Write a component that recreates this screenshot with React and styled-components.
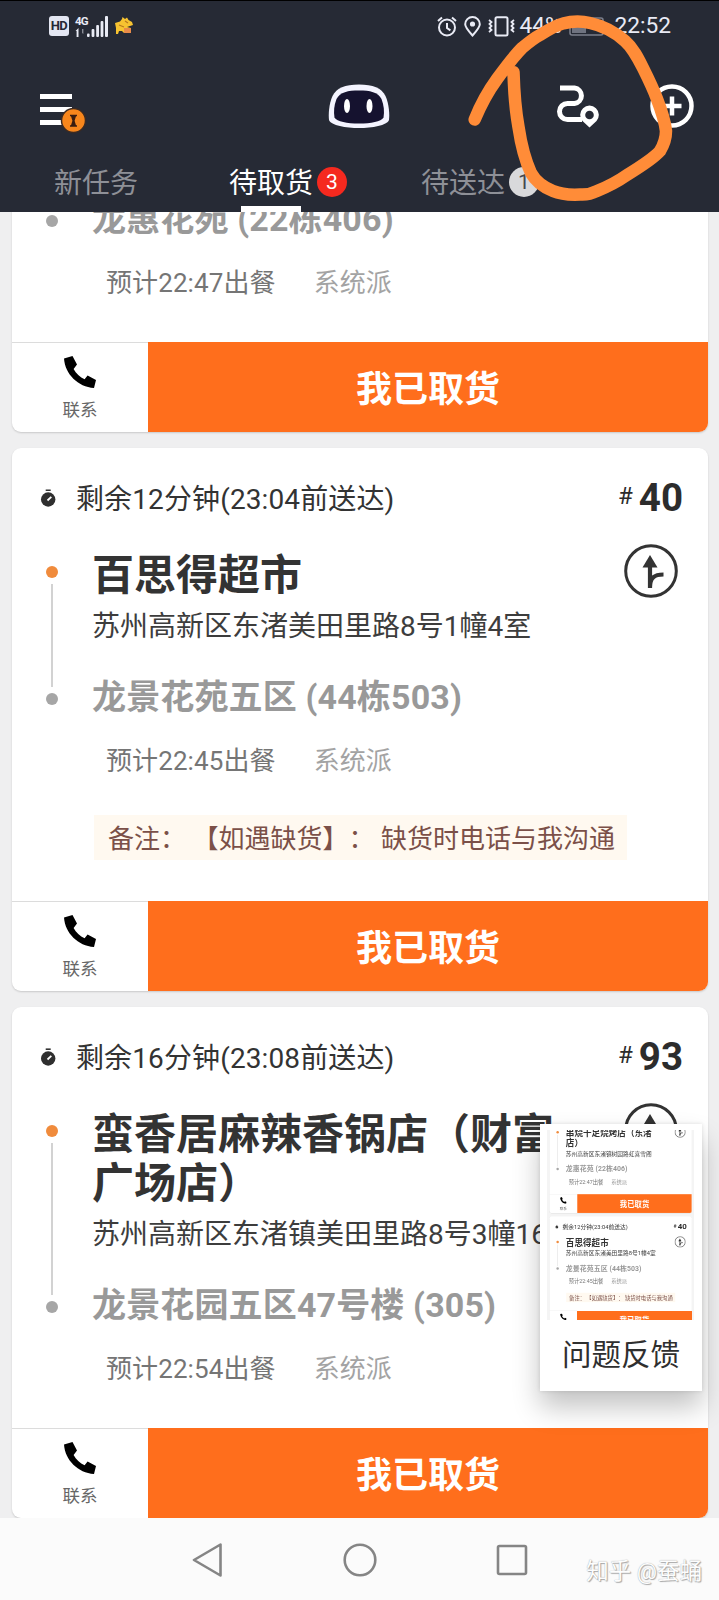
import React from 'react';
import styled, { createGlobalStyle } from 'styled-components';

const Global = createGlobalStyle`
  * { box-sizing: border-box; }
  body {
    margin: 0;
    background: #efeff0;
    font-family: Roboto, "Noto Sans CJK SC", sans-serif;
    text-spacing-trim: space-all;
  }
`;

const Screen = styled.div`
  position: relative;
  width: 719px;
  height: 1600px;
  display: flex;
  flex-direction: column;
  overflow: hidden;
`;

/* ---------- header ---------- */
const Header = styled.header`
  height: 212px;
  flex: none;
  background: #262a35;
  border-top: 1px solid #000;
  display: flex;
  flex-direction: column;
`;
const StatusBar = styled.div`
  height: 50px;
  padding: 0 48px 0 49px;
  display: flex;
  align-items: center;
  justify-content: space-between;
  color: #e9ebf5;
`;
const StatusGroup = styled.div`
  display: flex;
  align-items: center;
  gap: ${(p) => p.$gap || 7}px;
`;
const HdChip = styled.span`
  width: 20px;
  height: 20px;
  border-radius: 3px;
  background: #e3e6f2;
  color: #262a35;
  font-size: 13px;
  font-weight: 700;
  line-height: 20px;
  text-align: center;
  letter-spacing: -0.6px;
`;
const Signal = styled.div`
  display: flex;
  align-items: flex-end;
`;
const Generation = styled.div`
  width: 12px;
  height: 21px;
  font-size: 11.5px;
  line-height: 10px;
  font-weight: 700;
  letter-spacing: -0.8px;
`;
const SignalBars = styled.svg`
  margin-left: -12px;
`;
const Vibrate = styled.svg`
  margin-right: -3px;
`;
const StatusText = styled.span`
  font-size: 22.7px;
  line-height: 26px;
  white-space: nowrap;
`;
const Toolbar = styled.div`
  height: 105px;
  padding: 5px 25px 0 40px;
  display: grid;
  grid-template-columns: 1fr 62px 1fr;
  align-items: center;
`;
const Robot = styled.svg`
  margin-left: -8px;
`;
const ToolbarEnd = styled.div`
  display: flex;
  justify-content: flex-end;
  align-items: center;
  gap: 51px;
`;
const MenuButton = styled.div`
  position: relative;
  width: 47px;
  height: 40px;
  margin-top: 7px;
  padding-top: 4px;
  display: flex;
  flex-direction: column;
  gap: 8px;
`;
const MenuBar = styled.i`
  width: 32px;
  height: 5.3px;
  background: #fff;
`;
const CoinBadge = styled.svg`
  position: absolute;
  left: 20px;
  top: 17px;
`;
const Tabs = styled.nav`
  height: 56px;
  display: flex;
  padding-left: 54px;
`;
const Tab = styled.div`
  display: flex;
  flex-direction: column;
  justify-content: space-between;
  width: ${(p) => p.$width}px;
  color: ${(p) => (p.$active ? '#fff' : '#8e9097')};
`;
const TabLabel = styled.div`
  display: flex;
  align-items: center;
  gap: 4px;
  height: 50px;
  padding-top: 5px;
  font-size: 28px;
  line-height: 40px;
  white-space: nowrap;
`;
const Count = styled.span`
  width: 30px;
  height: 30px;
  margin-top: -3px;
  border-radius: 50%;
  text-align: center;
  font-size: 21px;
  line-height: 30px;
  background: ${(p) => (p.$muted ? '#d9d9db' : '#f5291f')};
  color: ${(p) => (p.$muted ? '#45484f' : '#fff')};
`;
const Underline = styled.i`
  height: 6px;
  width: 60px;
  margin-left: 12px;
  background: #fff;
`;
const Stroke = styled.svg`
  position: absolute;
  left: 0;
  top: 0;
  pointer-events: none;
`;

/* ---------- order list ---------- */
const List = styled.main`
  flex: 1;
  min-height: 0;
  padding: 0 11px 0 12px;
  overflow: hidden;
  display: flex;
  flex-direction: column;
  justify-content: flex-end;
  gap: 16px;
  background: #efeff0;
`;
const CardBox = styled.article`
  flex: none;
  background: #fff;
  border-radius: 9px;
  overflow: hidden;
  box-shadow: 0 1px 2px rgba(0, 0, 0, 0.16);
`;
const CardHead = styled.div`
  height: 100px;
  padding: 0 25px 0 28px;
  display: flex;
  align-items: center;
  color: #333;
`;
const Remaining = styled.span`
  flex: 1;
  margin: 3px 0 0 19px;
  font-size: 28px;
  line-height: 40px;
  letter-spacing: 0.12px;
  white-space: nowrap;
`;
const Serial = styled.span`
  font-size: 38.5px;
  line-height: 44px;
  font-weight: 700;
  color: #2c2c2c;
  display: flex;
  align-items: center;
  gap: 6px;
`;
const Hash = styled.small`
  font-size: 24px;
  line-height: 36px;
  font-weight: 400;
  margin-top: -4px;
`;
const Route = styled.div`
  padding: ${(p) => (p.$full ? '1px 30px 0 0' : '0')};
  display: grid;
  grid-template-columns: 80px 1fr 54px;
`;
const Rail = styled.div`
  padding: ${(p) => (p.$full ? '17px 0 16px' : '20px 0 16px')};
  display: flex;
  flex-direction: column;
  align-items: center;
  gap: 6px;
`;
const Dot = styled.i`
  width: 12px;
  height: 12px;
  border-radius: 50%;
  background: ${(p) => (p.$start ? '#f08b3c' : '#a6a6a6')};
`;
const RailLine = styled.i`
  flex: 1;
  width: 2px;
  background: #d2d2d2;
`;
const Stops = styled.div`
  width: 496px;
  padding-top: ${(p) => (p.$full ? 2 : 0)}px;
`;
const Shop = styled.h2`
  margin: 0;
  font-size: 42px;
  line-height: 49px;
  font-weight: 700;
  color: #333;
`;
const Address = styled.p`
  margin: 8px 0 27px;
  font-size: 28px;
  line-height: 38px;
  color: #3d3d3d;
  white-space: nowrap;
`;
const Destination = styled.h3`
  margin: 0;
  font-size: 34px;
  line-height: 48px;
  letter-spacing: 0.15px;
  font-weight: 700;
  color: #999;
  white-space: nowrap;
`;
const Direction = styled.svg`
  margin-top: -5px;
`;
const Meta = styled.div`
  margin: 22px 0 0 94px;
  display: flex;
  gap: 38px;
  font-size: 26px;
  line-height: 36px;
  letter-spacing: 0.1px;
  color: #757575;
  white-space: nowrap;
`;
const Source = styled.span`
  color: #a3a3a3;
`;
const Remark = styled.div`
  margin: 36px 0 0 82px;
  width: 533px;
  height: 45px;
  padding-left: 14px;
  background: #fff9f0;
  color: #7b5048;
  font-size: 26px;
  line-height: 48px;
  white-space: pre;
`;
const Actions = styled.div`
  margin-top: 41px;
  height: 90px;
  display: flex;
`;
const Contact = styled.div`
  width: 136px;
  border-top: 1px solid #dcdcdc;
  padding-top: 13px;
  display: flex;
  flex-direction: column;
  align-items: center;
  font-size: 17.5px;
  line-height: 24px;
  color: #666;
  gap: 10px;
`;
const Confirm = styled.div`
  flex: 1;
  background: #ff6e1c;
  color: #fff;
  font-size: 36px;
  line-height: 96px;
  height: 90px;
  font-weight: 700;
  text-align: center;
  white-space: nowrap;
`;

/* ---------- feedback popup ---------- */
const Feedback = styled.aside`
  position: absolute;
  left: 540px;
  top: 1124px;
  width: 162px;
  height: 267px;
  padding: 6px 7px 0;
  background: #fff;
  box-shadow: 0 16px 26px rgba(0, 0, 0, 0.24), 0 0 4px rgba(0, 0, 0, 0.12);
`;
const Preview = styled.div`
  width: 147px;
  height: 190px;
  overflow: hidden;
`;
const PreviewPage = styled.div`
  width: 719px;
  height: 912px;
  transform: scale(0.2045, 0.2084);
  transform-origin: 0 0;
  display: flex;
  flex-direction: column;
  gap: 16px;
  padding: 0 11px 0 12px;
  background: #f4f4f4;
`;
const PreviewFirst = styled.div`
  margin-top: -113px;
`;
const FeedbackLabel = styled.div`
  height: 70px;
  font-size: 29.5px;
  line-height: 70px;
  text-align: center;
  color: #2f2f2f;
  white-space: nowrap;
`;

/* ---------- system navigation ---------- */
const NavBar = styled.footer`
  height: 82px;
  flex: none;
  position: relative;
  background: #fbfbfb;
  display: flex;
  align-items: center;
  justify-content: center;
  gap: 119px;
  padding-top: 2px;
`;
const Watermark = styled.span`
  position: absolute;
  right: 17px;
  bottom: 13px;
  font-size: 22.5px;
  line-height: 32px;
  color: #fdfdfd;
  text-shadow: 0 0 1px #999, 1px 1px 1px #a8a8a8;
  white-space: nowrap;
`;

const PhoneIcon = () => (
  <svg width="32" height="32" viewBox="0 0 32 32" fill="#000">
    <path d="M0 2.5 L8.5 0 L13 8.5 L9.6 13 C12 17.5 16 21.2 20.6 23.2 L23.6 19.6 L32 24 L30 32 C14 31 1 18 0 2.5Z" />
  </svg>
);
const TimerIcon = () => (
  <svg width="17" height="19" viewBox="0 0 17 19">
    <path d="M5.7 1.2h5" stroke="#333" strokeWidth="1.6" />
    <circle cx="8.2" cy="10.5" r="7.2" fill="#2f2f2f" />
    <path d="M7.5 11.5l3.8-3.6" stroke="#fff" strokeWidth="1.8" />
  </svg>
);
const DirectionIcon = () => (
  <Direction width="54" height="54" viewBox="0 0 54 54">
    <circle cx="27" cy="27" r="25.3" fill="none" stroke="#333" strokeWidth="3" />
    <path d="M26 11L33.5 23.5H18.5Z" fill="#333" />
    <path d="M26 21V44M26 43C26 34 30 30.5 39.5 30.5" fill="none" stroke="#333" strokeWidth="4.2" />
  </Direction>
);

function OrderCard({ order }) {
  const full = Boolean(order.shop);
  return (
    <CardBox>
      {full && (
        <CardHead>
          <TimerIcon />
          <Remaining>{order.remaining}</Remaining>
          <Serial><Hash>#</Hash>{order.serial}</Serial>
        </CardHead>
      )}
      <Route $full={full}>
        <Rail $full={full}>
          {full && <Dot $start />}
          {full && <RailLine />}
          <Dot />
        </Rail>
        <Stops $full={full}>
          {full && <Shop>{order.shop}</Shop>}
          {full && <Address>{order.address}</Address>}
          <Destination>{order.destination}</Destination>
        </Stops>
        {full && <DirectionIcon />}
      </Route>
      <Meta>
        <span>{order.ready}</span>
        <Source>系统派</Source>
      </Meta>
      {order.remark && <Remark>{order.remark}</Remark>}
      <Actions>
        <Contact><PhoneIcon />联系</Contact>
        <Confirm>我已取货</Confirm>
      </Actions>
    </CardBox>
  );
}

const first = { destination: '龙惠花苑 (22栋406)', ready: '预计22:47出餐' };
const second = {
  remaining: '剩余12分钟(23:04前送达)',
  serial: '40',
  shop: '百思得超市',
  address: '苏州高新区东渚美田里路8号1幢4室',
  destination: '龙景花苑五区 (44栋503)',
  ready: '预计22:45出餐',
  remark: '备注： 【如遇缺货】： 缺货时电话与我沟通',
};
const third = {
  remaining: '剩余16分钟(23:08前送达)',
  serial: '93',
  shop: '蛮香居麻辣香锅店（财富广场店）',
  address: '苏州高新区东渚镇美田里路8号3幢16',
  destination: '龙景花园五区47号楼 (305)',
  ready: '预计22:54出餐',
};
const firstFull = {
  ...first,
  remaining: '',
  serial: '',
  shop: '串烧十足烧烤店（东渚店）',
  address: '苏州高新区东渚镇树园路虹喜雪阁',
};

export default function App() {
  return (
    <Screen>
      <Global />
      <Header>
        <StatusBar>
          <StatusGroup $gap={6}>
            <HdChip>HD</HdChip>
            <Signal>
              <Generation>4G</Generation>
              <SignalBars width="34" height="21" viewBox="-12 0 34 21" fill="#e9ebf5">
                <path d="M-11.500 15l3-3v9h-1.900v-6z" />
                <path d="M-5 13h1.400v5l-1.400-1z" opacity=".5" />
                <rect x="0" y="17.500" width="2.600" height="3.500" rx="1" />
                <rect x="4.600" y="13" width="2.800" height="8" rx="1" />
                <rect x="9.200" y="9" width="2.800" height="12" rx="1" />
                <rect x="13.600" y="5" width="2.800" height="16" rx="1" />
                <rect x="18" y="0" width="3" height="21" rx="1" />
              </SignalBars>
            </Signal>
            <svg width="19" height="18" viewBox="0 0 19 18">
              <path d="M0 6L5 4.500 7 2 7.500 0 10 2 12 .5 13.500 3 17 5 18 8 12 10 16 11 16 16 9 16 7 14 4 14 3 17 1 17 1 11Z" fill="#f7c331" />
              <path d="M9 11h7v5H9z" fill="#e98b49" />
              <path d="M4 8l5 2M10 4l3 2" stroke="#b8791d" strokeWidth="1.200" />
            </svg>
          </StatusGroup>
          <StatusGroup $gap={7}>
            <svg width="20" height="21" viewBox="0 0 20 21" fill="none" stroke="#e9ebf5" strokeWidth="2">
              <circle cx="10" cy="11.500" r="8" />
              <path d="M1 5L5 1.500M19 5L15 1.500M10 7v5l3.400 2.400" />
            </svg>
            <svg width="17" height="21" viewBox="0 0 17 21" fill="none" stroke="#e9ebf5" strokeWidth="2">
              <path d="M8.500 19.500C4 14.500 1.200 11.500 1.200 8.300a7.300 7.300 0 0 1 14.600 0C15.800 11.500 13 14.500 8.500 19.500Z" />
              <circle cx="8.500" cy="8" r="1.600" fill="#e9ebf5" />
            </svg>
            <Vibrate width="27" height="21" viewBox="0 0 27 21" fill="none" stroke="#e9ebf5" strokeWidth="2">
              <rect x="7.500" y="1.200" width="12" height="18.300" rx="1.500" />
              <path d="M1 4l2.500 2-2 2 2 2-2 2 2 2-2.500 2M26 4l-2.500 2 2 2-2 2 2 2-2 2 2.500 2" strokeWidth="1.800" />
            </Vibrate>
            <StatusText>44%</StatusText>
            <svg width="39" height="19" viewBox="0 0 39 19" fill="none">
              <rect x="1" y="1" width="33" height="17" rx="2" stroke="#7b7f8b" strokeWidth="1.500" />
              <rect x="3" y="3" width="14" height="13" fill="#6f7380" />
              <path d="M36.500 6v7" stroke="#e9ebf5" strokeWidth="2" />
            </svg>
            <StatusText>22:52</StatusText>
          </StatusGroup>
        </StatusBar>
        <Toolbar>
          <MenuButton>
            <MenuBar /><MenuBar /><MenuBar />
            <CoinBadge width="27" height="27" viewBox="0 0 27 27">
              <circle cx="13.500" cy="13.500" r="12" fill="#f7861c" stroke="#3b2a22" strokeWidth="1.500" />
              <path d="M10 8.500h7M10 19h7" stroke="#3a1d10" strokeWidth="1.600" />
              <path d="M10.800 8.500h5.400L14.600 13.700l1.600 5.300h-5.400L12.400 13.700Z" fill="#3a1d10" />
            </CoinBadge>
          </MenuButton>
          <Robot width="62" height="46" viewBox="0 0 62 46">
            <path d="M31 1.500C17 1.500 8.500 5 4.500 13C1 21 .3 31 1 37C3 42.500 18 45 31 45S59 42.500 61 37C61.700 31 61 21 57.500 13C53.500 5 45 1.500 31 1.500Z" fill="#f4f4ff" />
            <path d="M31 7.500C20 7.500 12 9 8.500 16C6 22 5.500 29 6.500 34.500C9 38.500 19 40.500 31 40.500S53 38.500 55.500 34.500C56.500 29 56 22 53.500 16C50 9 42 7.500 31 7.500Z" fill="#15122f" />
            <ellipse cx="19" cy="23" rx="3" ry="7" fill="#fff" />
            <ellipse cx="41.500" cy="23" rx="3" ry="7" fill="#fff" />
          </Robot>
          <ToolbarEnd>
            <svg width="43" height="44" viewBox="0 0 43 44" fill="none">
              <path d="M4 4H18.500A7.800 7.800 0 0 1 18.500 19.500H11.500A8 8 0 0 0 11.500 35.500H26" stroke="#fff" strokeWidth="5" />
              <path d="M33.500 43.500L26.500 37A9.300 9.300 0 1 1 40.500 37Z" fill="#fff" />
              <circle cx="33.500" cy="31" r="4.300" fill="#262a35" />
            </svg>
            <svg width="44" height="44" viewBox="0 0 44 44" fill="none" stroke="#fff" strokeWidth="4.500">
              <circle cx="22" cy="22" r="19.500" />
              <path d="M22 12.500v19M12.500 22h19" />
            </svg>
          </ToolbarEnd>
        </Toolbar>
        <Tabs>
          <Tab $width={175}><TabLabel>新任务</TabLabel></Tab>
          <Tab $width={192} $active><TabLabel>待取货<Count>3</Count></TabLabel><Underline /></Tab>
          <Tab $width={150}><TabLabel>待送达<Count $muted>1</Count></TabLabel></Tab>
        </Tabs>
      </Header>

      <List>
        <OrderCard order={first} />
        <OrderCard order={second} />
        <OrderCard order={third} />
      </List>

      <NavBar>
        <svg width="32" height="34" viewBox="0 0 32 34" fill="none" stroke="#858585" strokeWidth="2.600" strokeLinejoin="round">
          <path d="M28.500 1.500V32.500L2 17Z" />
        </svg>
        <svg width="34" height="34" viewBox="0 0 34 34" fill="none" stroke="#858585" strokeWidth="2.600">
          <circle cx="17" cy="17" r="15.300" />
        </svg>
        <svg width="32" height="34" viewBox="0 0 32 34" fill="none" stroke="#858585" strokeWidth="2.600">
          <rect x="2" y="3" width="28" height="28" rx="1.500" />
        </svg>
        <Watermark>知乎 @蚕蛹</Watermark>
      </NavBar>

      <Feedback>
        <Preview>
          <PreviewPage>
            <PreviewFirst><OrderCard order={firstFull} /></PreviewFirst>
            <OrderCard order={second} />
          </PreviewPage>
        </Preview>
        <FeedbackLabel>问题反馈</FeedbackLabel>
      </Feedback>

      <Stroke width="719" height="212" viewBox="0 0 719 212" fill="none" stroke="#ff8c38" strokeWidth="12.500" strokeLinecap="round" strokeLinejoin="round">
        <path d="M474.700 119.500C481 104 489 90 497 79C505 68 513 57 522 48C528 43 534 38 540 35C548 30 556 25 563 23.500C572 21 582 21 590 23C604 26 616 33 625 41C633 48 638 58 643 68C648 78 653 88 657 99C662 112 665 122 666 131C666 140 663 146 660 151C653 159 640 167 627 175C617 182 607 187 597 191C591 194 586 195 580 194.500C570 195 560 194 553 191C543 187 536 182 531 173C525 160 521 144 518.500 127C515 108 514 90 513.500 72" />
      </Stroke>
    </Screen>
  );
}
